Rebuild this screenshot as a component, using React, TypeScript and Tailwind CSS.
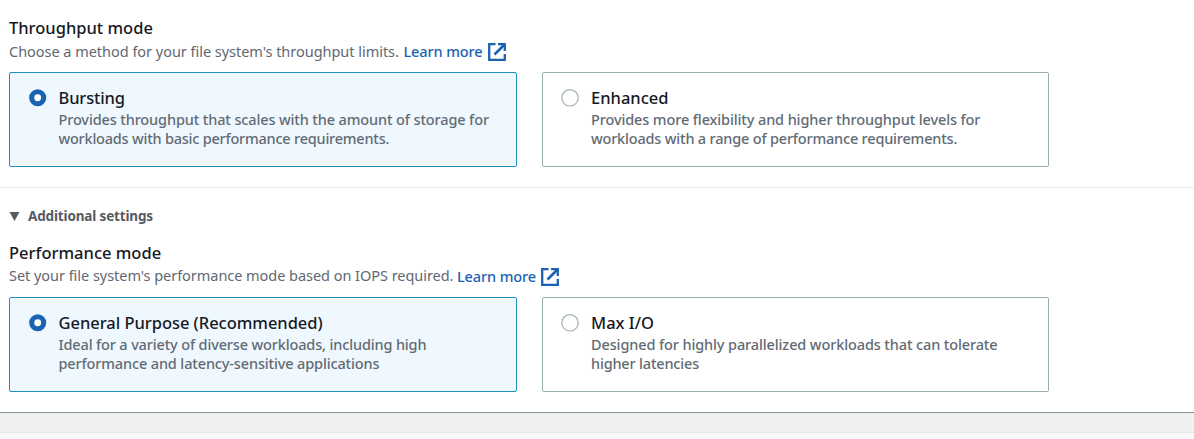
import type { ReactNode } from "react";

function ExternalIcon() {
  return (
    <svg className="size-[18px] shrink-0" viewBox="0 0 18 18" fill="none" stroke="#1a63b3" strokeWidth="2.3">
      <path d="M7.5 1.2H1.2v15.6h15.6V11" />
      <path d="M10 1.2h6.8V8" />
      <path d="M16.5 1.5 6.5 11.5" strokeWidth="2.7" />
    </svg>
  );
}

function Line({ className, children }: { className?: string; children: ReactNode }) {
  return <span className={`block whitespace-nowrap ${className ?? ""}`}>{children}</span>;
}

function Radio({ checked }: { checked?: boolean }) {
  return (
    <svg className="-ml-[0.5px] -mt-[0.5px] size-[18px] shrink-0" viewBox="0 0 18 18">
      {checked ? (
        <circle cx="8.7" cy="8.7" r="6" fill="#fff" stroke="#1a63b3" strokeWidth="5.1" />
      ) : (
        <circle cx="9" cy="8.8" r="8.2" fill="#fff" stroke="#9db0af" strokeWidth="1.2" />
      )}
    </svg>
  );
}

function Tile({ checked, title, children }: { checked?: boolean; title: ReactNode; children: ReactNode }) {
  return (
    <label
      className={`flex h-[95px] rounded-[2px] border pt-4 ${
        checked ? "w-[508px] gap-[12px] border-[#1b91b9] bg-[#f0f8ff] pl-[19px]" : "w-[507px] gap-3 border-[#9aaeac] bg-white pl-[18.5px]"
      }`}
    >
      <Radio checked={checked} />
      <span className="block">
        <span className="-mt-px block text-[16.5px] leading-5 text-[#16191f]">{title}</span>
        <span className="mt-[2px] block text-[14.5px] leading-[19px] text-[#626b74]">{children}</span>
      </span>
    </label>
  );
}

export default function App() {
  return (
    <div className="flex h-[439px] w-[1194px] flex-col overflow-hidden bg-white font-['Noto_Sans',sans-serif] text-[14.5px] font-medium">
      <section className="h-[188px] border-b border-[#eaeded] pl-[9px] pt-[18px]">
        <h2 className="h-[23px] text-[16.5px] leading-5 text-[#16191f]"><Line>Throughput mode</Line></h2>
        <div className="flex h-[31px] text-[#5f6872]">
          <Line className="w-[394.5px] font-normal leading-[21px] tracking-[-0.03px]">Choose a method for your file system's throughput limits.</Line>
          <a className="flex h-[22px] items-center gap-[5.5px] text-[#1a63b3]"><Line className="w-[79px] tracking-[-0.12px]">Learn more</Line><ExternalIcon /></a>
        </div>
        <div className="flex gap-[25px]">
          <Tile checked title={<Line className="tracking-[-0.15px]">Bursting</Line>}>
            <Line className="tracking-[-0.13px]">Provides throughput that scales with the amount of storage for</Line>
            <Line className="tracking-[-0.22px]">workloads with basic performance requirements.</Line>
          </Tile>
          <Tile title={<Line>Enhanced</Line>}>
            <Line className="tracking-[-0.12px]">Provides more flexibility and higher throughput levels for</Line>
            <Line className="tracking-[-0.19px]">workloads with a range of performance requirements.</Line>
          </Tile>
        </div>
      </section>
      <section className="h-[225px] border-b border-[#879596] pl-[9px] pt-[18px]">
        <div className="flex h-5 items-center gap-2 text-[#545b64]">
          <svg className="h-[9px] w-[11px]" viewBox="0 0 11 9"><path d="M.5 0h10L5.5 9z" fill="currentColor" /></svg>
          <Line className="text-[13.5px] font-bold tracking-[-0.15px]">Additional settings</Line>
        </div>
        <h2 className="mt-[17px] h-[23px] text-[16.5px] leading-5 text-[#16191f]"><Line>Performance mode</Line></h2>
        <div className="flex h-[31px] text-[#5f6872]">
          <Line className="w-[448px] font-normal leading-[19px] tracking-[-0.04px]">Set your file system's performance mode based on IOPS required.</Line>
          <a className="flex h-[22px] items-center gap-[5px] text-[#1a63b3]"><Line className="w-[79px] tracking-[-0.12px]">Learn more</Line><ExternalIcon /></a>
        </div>
        <div className="flex gap-[25px]">
          <Tile checked title={<Line className="tracking-[-0.03px]">General Purpose (Recommended)</Line>}>
            <Line className="tracking-[-0.15px]">Ideal for a variety of diverse workloads, including high</Line>
            <Line className="tracking-[-0.14px]">performance and latency-sensitive applications</Line>
          </Tile>
          <Tile title={<Line>Max I/O</Line>}>
            <Line className="tracking-[-0.12px]">Designed for highly parallelized workloads that can tolerate</Line>
            <Line className="tracking-[-0.18px]">higher latencies</Line>
          </Tile>
        </div>
      </section>
      <div className="h-5 border-b border-[#e3e8e8] bg-[#eff1f1]" />
      <div className="flex-1 bg-[#fafafa]" />
    </div>
  );
}
